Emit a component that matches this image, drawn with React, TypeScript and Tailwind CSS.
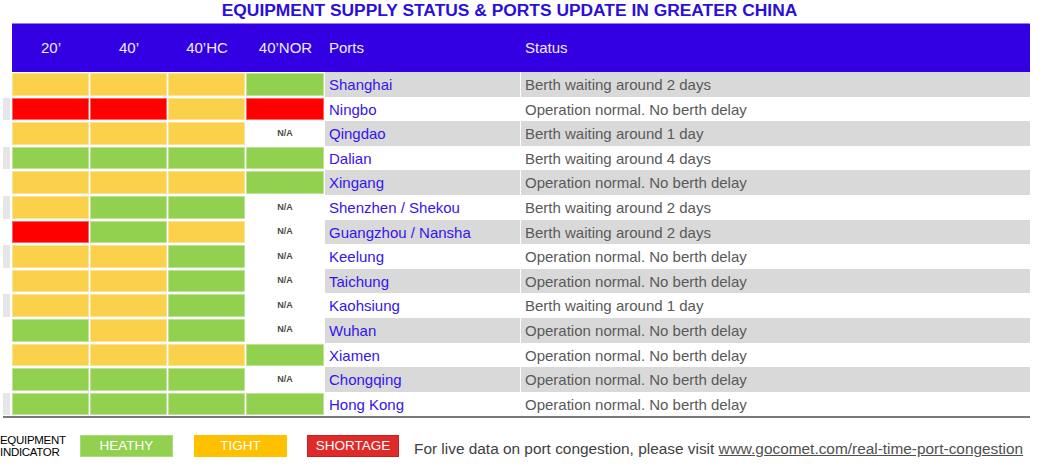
type Level = "Y" | "G" | "R" | "NA";

const rows: { port: string; status: string; levels: Level[]; stub?: boolean }[] = [
  { port: "Shanghai", status: "Berth waiting around 2 days", levels: ["Y", "Y", "Y", "G"] },
  { port: "Ningbo", status: "Operation normal. No berth delay", levels: ["R", "R", "Y", "R"], stub: true },
  { port: "Qingdao", status: "Berth waiting around 1 day", levels: ["Y", "Y", "Y", "NA"] },
  { port: "Dalian", status: "Berth waiting around 4 days", levels: ["G", "G", "G", "G"], stub: true },
  { port: "Xingang", status: "Operation normal. No berth delay", levels: ["Y", "Y", "Y", "G"] },
  { port: "Shenzhen / Shekou", status: "Berth waiting around 2 days", levels: ["Y", "G", "G", "NA"], stub: true },
  { port: "Guangzhou / Nansha", status: "Berth waiting around 2 days", levels: ["R", "G", "Y", "NA"] },
  { port: "Keelung", status: "Operation normal. No berth delay", levels: ["Y", "Y", "G", "NA"], stub: true },
  { port: "Taichung", status: "Operation normal. No berth delay", levels: ["Y", "Y", "G", "NA"] },
  { port: "Kaohsiung", status: "Berth waiting around 1 day", levels: ["Y", "Y", "G", "NA"], stub: true },
  { port: "Wuhan", status: "Operation normal. No berth delay", levels: ["G", "Y", "G", "NA"] },
  { port: "Xiamen", status: "Operation normal. No berth delay", levels: ["Y", "Y", "Y", "G"] },
  { port: "Chongqing", status: "Operation normal. No berth delay", levels: ["G", "G", "G", "NA"] },
  { port: "Hong Kong", status: "Operation normal. No berth delay", levels: ["G", "G", "G", "G"], stub: true },
];

const cellColor: Record<Level, string> = {
  Y: "bg-[#fbd14b]",
  G: "bg-[#92d050]",
  R: "bg-[#ff0000]",
  NA: "bg-white",
};

const colWidths = ["w-[77px]", "w-[77px]", "w-[77px]", "w-[78px]"];

export default function App() {
  return (
    <div className="h-[471px] w-[1046px] overflow-hidden bg-white font-['Liberation_Sans',Arial,sans-serif]">
      <h1 className="h-[23px] w-[1019px] text-center text-[17.4px] font-bold leading-[20px] text-[#2b0fd9]">
        EQUIPMENT SUPPLY STATUS &amp; PORTS UPDATE IN GREATER CHINA
      </h1>

      {/* header */}
      <div className="ml-[12px] flex h-[49px] w-[1018px] items-center border-t border-[#8f80f0] bg-[#3300e3] text-[15px] text-[#f0ecff]">
        <div className="w-[78px] text-center">20’</div>
        <div className="w-[78px] text-center">40’</div>
        <div className="w-[78px] text-center">40’HC</div>
        <div className="w-[79px] text-center">40’NOR</div>
        <div className="w-[196px] pl-[4px]">Ports</div>
        <div className="flex-1 pl-[4px]">Status</div>
      </div>

      {/* rows */}
      <div className="w-[1030px]">
        {rows.map((r, i) => (
          <div key={r.port} className="flex h-[24.6px]">
            <div className="flex w-[12px] items-stretch py-[1px] pl-[3px] pr-[2px]">
              {r.stub && <div className="flex-1 bg-[#e6e6e6]" />}
            </div>
            {r.levels.map((lv, j) => (
              <div key={j} className={`${colWidths[j]} mr-[1px] py-[1px]`}>
                <div
                  className={`flex h-full items-center justify-center ${cellColor[lv]} ${
                    lv === "NA" ? "" : "border border-white/40"
                  }`}
                >
                  {lv === "NA" && <span className="text-[9px] font-bold text-[#4a4a4a]">N/A</span>}
                </div>
              </div>
            ))}
            <div
              className={`flex w-[195px] items-center pl-[4px] pt-[2px] text-[15px] text-[#3414ee] ${
                i % 2 === 0 ? "bg-[#d9d9d9]" : ""
              }`}
            >
              {r.port}
            </div>
            <div
              className={`ml-[1px] flex flex-1 items-center pl-[4px] pt-[2px] text-[15px] text-[#595959] ${
                i % 2 === 0 ? "bg-[#d9d9d9]" : ""
              }`}
            >
              {r.status}
            </div>
          </div>
        ))}
      </div>
      <div className="ml-[3px] h-[2px] w-[1027px] bg-[#7a7a7a]" />

      {/* legend */}
      <div className="mt-[14px] flex items-center">
        <div className="w-[63px] text-[11.5px] leading-[12.5px] tracking-[-0.3px] text-black">
          EQUIPMENT
          <br />
          INDICATOR
        </div>
        <div className="ml-[17px] flex h-[22px] w-[93px] items-center justify-center border border-[#a9dc7a] bg-[#92d050] text-[13.5px] text-white">
          HEATHY
        </div>
        <div className="ml-[21px] flex h-[22px] w-[93px] items-center justify-center bg-[#ffc000] text-[13.5px] text-white">
          TIGHT
        </div>
        <div className="ml-[20px] flex h-[22px] w-[92px] items-center justify-center border border-[#c42020] bg-[#e02a2a] text-[13.5px] text-white">
          SHORTAGE
        </div>
        <p className="ml-[15px] mt-[5px] text-[15.4px] text-[#404040]">
          For live data on port congestion, please visit{" "}
          <a href="#" className="text-[#505050] underline">
            www.gocomet.com/real-time-port-congestion
          </a>
        </p>
      </div>
    </div>
  );
}
